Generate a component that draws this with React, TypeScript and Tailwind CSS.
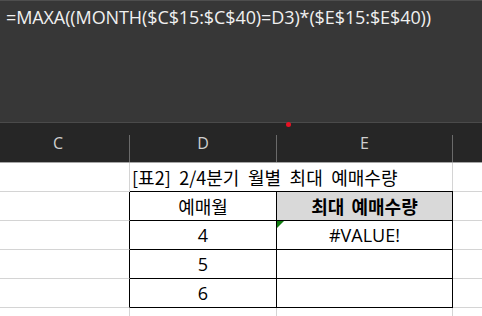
import React from "react";

const kr = { fontFamily: '"Noto Sans CJK KR", "Noto Sans", sans-serif' };
const latin = { fontFamily: '"Open Sans", "Noto Sans CJK KR", sans-serif' };

const HeaderCell = ({ label, w }: { label: string; w: string }) => (
  <div className={`${w} flex items-center justify-center text-[16px] text-[#cfcfcf]`}>{label}</div>
);

const Sep = () => <div className="w-px h-[27px] self-end bg-[#6a6a6a]" />;

export default function App() {
  const rows = ["4", "5", "6"];
  return (
    <div className="w-[482px] h-[316px] overflow-hidden bg-white" style={latin}>
      {/* formula bar */}
      <div className="h-[123px] bg-[#373737] border-t border-[#4e4e4e] border-b border-b-[#4a4a4a] relative">
        <div className="pl-[6px] pt-[3px] text-[18px] text-[#f0f0f0] whitespace-nowrap tracking-[-0.1px]">
          =MAXA((MONTH($C$15:$C$40)=D3)*($E$15:$E$40))
        </div>
        <div className="absolute left-[286px] top-[121px] w-[5px] h-[5px] rounded-full bg-[#e81123]" />
      </div>

      {/* column headers */}
      <div className="h-[40px] bg-[#262626] border-b border-[#a6a6a6] flex">
        <div className="w-[129px] flex items-center justify-center pr-[13px] text-[16px] text-[#cfcfcf]">C</div>
        <Sep />
        <HeaderCell label="D" w="w-[146px]" />
        <Sep />
        <HeaderCell label="E" w="w-[175px]" />
        <Sep />
        <div className="flex-1" />
      </div>

      {/* grid */}
      <div className="grid grid-cols-[130px_147px_176px_1fr] text-black" style={kr}>
        {/* row 1 */}
        <div className="h-[29px] border-r border-b border-[#d4d4d4]" />
        <div className="col-span-2 h-[29px] border-b border-black flex items-center pl-[2px] text-[18px] [word-spacing:4.5px] whitespace-nowrap relative">
          [표2] 2/4분기 월별 최대 예매수량
          <div className="absolute right-0 top-0 bottom-0 w-px bg-[#d4d4d4]" />
        </div>
        <div className="h-[29px] border-b border-[#d4d4d4]" />

        {/* row 2 */}
        <div className="h-[29px] border-r border-b border-r-black border-b-[#d4d4d4]" />
        <div className="h-[29px] border-r border-b border-black flex items-center justify-center text-[18px]">예매월</div>
        <div className="h-[29px] border-r border-b border-black bg-[#d9d9d9] flex items-center justify-center text-[18px] font-bold [word-spacing:3px]">최대 예매수량</div>
        <div className="h-[29px] border-b border-[#d4d4d4]" />

        {rows.map((n, i) => (
          <React.Fragment key={n}>
            <div className="h-[29px] border-r border-b border-r-black border-b-[#d4d4d4]" />
            <div className="h-[29px] border-r border-b border-black flex items-center justify-center text-[18px]" style={latin}>{n}</div>
            <div className="h-[29px] border-r border-b border-black flex items-center justify-center text-[18px] relative" style={latin}>
              {i === 0 && (
                <>
                  <div className="absolute left-0 top-0 w-0 h-0 border-t-[7px] border-t-[#107c10] border-r-[7px] border-r-transparent" />
                  #VALUE!
                </>
              )}
            </div>
            <div className="h-[29px] border-b border-[#d4d4d4]" />
          </React.Fragment>
        ))}

        <div className="h-[10px] border-r border-[#d4d4d4]" />
        <div className="h-[10px] border-r border-[#d4d4d4]" />
        <div className="h-[10px] border-r border-[#d4d4d4]" />
        <div className="h-[10px]" />
      </div>
    </div>
  );
}
